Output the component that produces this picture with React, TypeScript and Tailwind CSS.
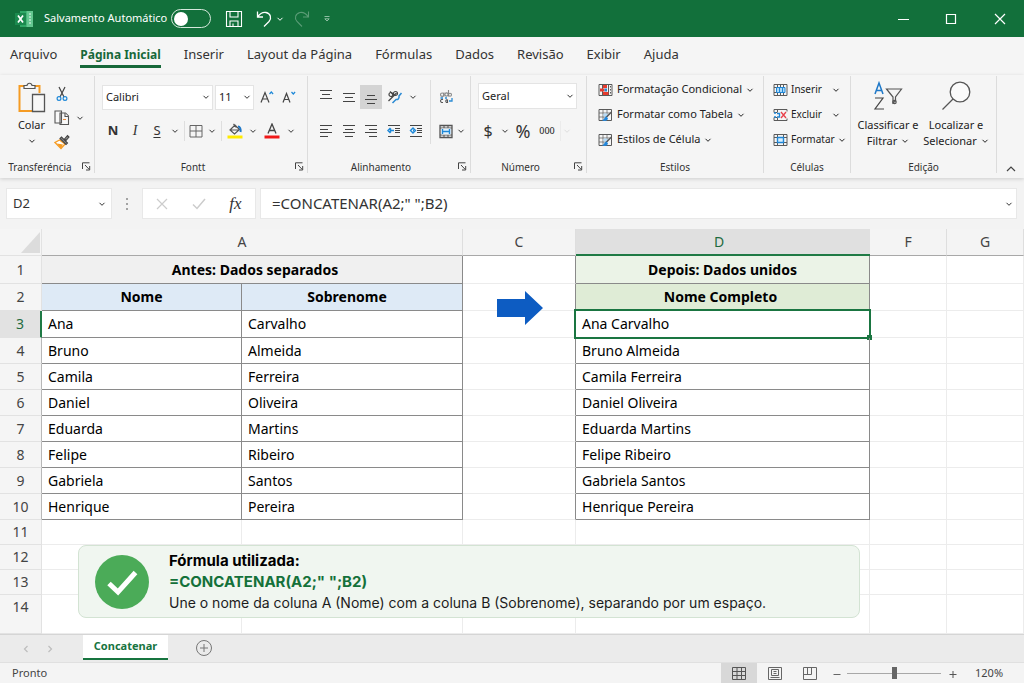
import type { ReactNode } from "react";

const people = [
  ["Ana", "Carvalho"],
  ["Bruno", "Almeida"],
  ["Camila", "Ferreira"],
  ["Daniel", "Oliveira"],
  ["Eduarda", "Martins"],
  ["Felipe", "Ribeiro"],
  ["Gabriela", "Santos"],
  ["Henrique", "Pereira"],
];

const tabs = ["Arquivo", "Página Inicial", "Inserir", "Layout da Página", "Fórmulas", "Dados", "Revisão", "Exibir", "Ajuda"];

function Chevron({ className = "" }: { className?: string }) {
  return (
    <svg viewBox="0 0 8 8" className={`h-2 w-2 shrink-0 ${className}`} fill="none" stroke="currentColor" strokeWidth="1" aria-hidden="true">
      <path d="M1.500 2.800 4 5.300l2.500-2.500" />
    </svg>
  );
}

function Launcher({ label }: { label: string }) {
  return (
    <button aria-label={label} className="flex w-4 items-center justify-center">
      <svg viewBox="0 0 9 9" className="h-[9px] w-[9px]" fill="none" stroke="#444" strokeWidth="1" aria-hidden="true">
        <path d="M.5 7V.8h7M3 3l4.2 4.4M7.7 4v4H4" />
      </svg>
    </button>
  );
}

function Group({ label, launcher, className, children }: { label: string; launcher?: boolean; className: string; children: ReactNode }) {
  return (
    <section aria-label={label} className={`flex h-[97px] shrink-0 flex-col border-r border-[#dcdcdc] ${className}`}>
      <div className="h-[84px]">{children}</div>
      <div className="flex h-[13px] items-center">
        <span className="flex-1 text-center text-[10px] leading-[14px] text-[#333]">{label}</span>
        {launcher && <Launcher label={`Opções de ${label}`} />}
      </div>
    </section>
  );
}

function Tool({ label, className = "w-[23px]", children }: { label: string; className?: string; children: ReactNode }) {
  return (
    <button aria-label={label} className={`flex h-6 shrink-0 items-center justify-center ${className}`}>
      {children}
    </button>
  );
}

function Drop({ label, className = "w-[14px]" }: { label: string; className?: string }) {
  return (
    <Tool label={label} className={className}>
      <Chevron />
    </Tool>
  );
}

function Picker({ label, value, className }: { label: string; value: string; className: string }) {
  return (
    <div className={`relative flex items-center border border-[#e4e4e4] bg-white ${className}`}>
      <select aria-label={label} className="h-full w-full appearance-none bg-transparent pl-[3px] text-[11px] text-[#222] outline-none" defaultValue={value}>
        <option>{value}</option>
      </select>
      <Chevron className="pointer-events-none absolute right-[2px]" />
    </div>
  );
}

function Lines({ rows }: { rows: [number, number, number][] }) {
  return (
    <svg viewBox="0 0 14 14" className="h-[14px] w-[14px]" stroke="#444" strokeWidth="1" aria-hidden="true">
      {rows.map(([x1, x2, y]) => (
        <path key={y} d={`M${x1} ${y}H${x2}`} />
      ))}
    </svg>
  );
}

function Indent({ right }: { right?: boolean }) {
  return (
    <svg viewBox="0 0 14 14" className="h-[14px] w-[14px]" fill="none" stroke="#444" aria-hidden="true">
      <path d="M1 1.500h12M8 4.500h5M8 8.500h5M1 12.500h12M8 6.500h5" />
      {right ? (
        <path d="M4 4 6.500 6.500 4 9 1.500 6.500zM4 6.500h1" stroke="#1e88d8" strokeWidth="1.400" />
      ) : (
        <path d="M3.500 4 1 6.500 3.500 9M3.500 4.500v4M3.500 6.500H7" stroke="#1e88d8" strokeWidth="1.500" />
      )}
    </svg>
  );
}

function Sep({ className = "bg-[#dedede]" }: { className?: string }) {
  return <span className={`h-5 w-px shrink-0 ${className}`} />;
}

type IconKind = "conditional" | "brush" | "insert" | "delete" | "format";

function GridIcon({ kind }: { kind: IconKind }) {
  return (
    <svg viewBox="0 0 15 14" className="h-[14px] w-[15px] shrink-0" fill="none" stroke="#5a5a5a" aria-hidden="true">
      {kind === "conditional" && (
        <>
          <path d="M1 1.500h13v11H1zM4.500 1.500v11M10.500 1.500v11" />
          <path d="M12.500 3v1.500M12.500 6v1.500M12.500 9v1.500" />
          <path d="M5 2h4v3H5zM5 9h5.500v3H5zM2 5.500h4.500v3H2z" fill="#e63b2e" stroke="none" />
          <path d="M6.500 5.500h2.500v3H6.500z" fill="#2a8ad4" stroke="none" />
        </>
      )}
      {kind === "brush" && (
        <>
          <path d="M1 1.500h12.500v11H1z" />
          <path d="M5 1.500v11M9 1.500V9M1 5h11M1 9h8" strokeWidth=".7" />
          <path d="M5.500 5.500h4v3h-4z" fill="#b9dcf6" stroke="none" />
          <path d="M13.500 4 8 9.500" stroke="#555" strokeWidth="1.500" />
          <path d="M8.500 8.500c-2 0-2 3-4.500 4 2.500 1 5.500.5 6-2z" fill="#2488dc" stroke="none" />
        </>
      )}
      {kind === "insert" && (
        <>
          <path d="M1 1.500h13v11H1zM4.500 1.500v3M10.500 1.500v3M7.500 1.500v3M4.500 9.500v3M10.500 9.500v3M7.500 9.500v3M1 4.500h3M1 9.500h3" />
          <path d="M3.500 4.500h8.500v5H3.500z" fill="#a9d8f7" stroke="#1f86d6" />
          <path d="M6.500 4.500v5M9.500 4.500v5" stroke="#1f86d6" />
        </>
      )}
      {kind === "delete" && (
        <>
          <path d="M8 1.500H1v3h3M8 12.500H1v-3h3M4.500 1.500v3M4.500 9.500v3M8 1.500h6v2M8 12.500h6v-2" />
          <path d="M1 5h2M1 9h2M4 5.500h2.500v3.500H4" stroke="#1f86d6" strokeWidth="1.300" />
          <path d="m8 4 5 6M13 4l-5 6" stroke="#e8414b" strokeWidth="1.300" />
        </>
      )}
      {kind === "format" && (
        <>
          <path d="M1 1.500h13v11H1zM1 4.500h13M1 9.500h13M4.500 1.500v11M10.500 1.500v11" />
          <path d="M4.500 4.500h6v5h-6z" fill="#d8eefc" stroke="#1f86d6" strokeWidth="1.400" />
        </>
      )}
    </svg>
  );
}

function MenuRow({ kind, label, className = "gap-1 text-[11px]" }: { kind: IconKind; label: string; className?: string }) {
  return (
    <button className={`flex h-[25px] items-center whitespace-nowrap text-[#222] ${className}`}>
      <GridIcon kind={kind} />
      <span>{label}</span>
      <Chevron className="ml-auto" />
    </button>
  );
}

function TitleBar() {
  return (
    <header className="flex h-[37px] items-center bg-[#12703b] pl-[15px] text-white">
      <svg viewBox="0 0 18 16" className="h-4 w-[18px]" aria-hidden="true">
        <path d="M5 0h13v16H5z" fill="#2fa866" />
        <path d="M11.500 0H18v16h-6.500z" fill="#63c78f" />
        <path d="M14 3h2M14 6h2M14 9h2M14 12h2" stroke="#e7f7ee" />
        <path d="M0 2h11v12H0z" fill="#1b8a4e" />
        <path d="m3 4.500 5 7M8 4.500l-5 7" stroke="#fff" strokeWidth="1.700" />
      </svg>
      <label className="ml-[11px] flex items-center gap-1 text-[11px]">
        Salvamento Automático
        <input type="checkbox" className="peer sr-only" />
        <span className="flex h-[19px] w-10 items-center rounded-full border border-[#d5e8dc] px-[2px]">
          <span className="h-[14px] w-[14px] rounded-full bg-white" />
        </span>
      </label>
      <button aria-label="Salvar" className="ml-[14px]">
        <svg viewBox="0 0 18 18" className="h-[18px] w-[18px]" fill="none" stroke="#fff" strokeWidth="1.100" aria-hidden="true">
          <path d="M1.500 1.500h15v15h-15zM5 1.500V7h8V1.500M5 16.500V11h8v5.500M8 16.500v-3" />
        </svg>
      </button>
      <button aria-label="Desfazer" className="ml-[13px]">
        <svg viewBox="0 0 16 18" className="h-[18px] w-4" fill="none" stroke="#fff" strokeWidth="1.300" aria-hidden="true">
          <path d="M1.500 1.500v5.500H7M1.500 7C4 3.500 7 2 10 2.500c4.500 1 6 5.500 3 9L8 16.500" />
        </svg>
      </button>
      <button aria-label="Opções de desfazer" className="ml-1">
        <Chevron />
      </button>
      <button aria-label="Refazer" className="ml-[10px] text-[#5a9c76]">
        <svg viewBox="0 0 16 18" className="h-[18px] w-4" fill="none" stroke="currentColor" strokeWidth="1.100" aria-hidden="true">
          <path d="M14.500 1.500v5.500H9M14.500 7C12 3.500 9 2 6 2.500c-4.500 1-6 5.500-3 9L8 16.500" />
        </svg>
      </button>
      <button aria-label="Personalizar acesso rápido" className="ml-[13px] text-[#9cc7ae]">
        <svg viewBox="0 0 8 8" className="h-2 w-2" fill="none" stroke="currentColor" strokeWidth=".9" aria-hidden="true">
          <path d="M1.500 1.500h5M1.800 3.800h4.400L4 6z" />
        </svg>
      </button>
      <div className="ml-auto flex">
        <button aria-label="Minimizar" className="flex w-12 justify-center">
          <svg viewBox="0 0 12 12" className="h-3 w-3" stroke="#fff" aria-hidden="true"><path d="M1 6.500h11" /></svg>
        </button>
        <button aria-label="Maximizar" className="flex w-12 justify-center">
          <svg viewBox="0 0 12 12" className="h-3 w-3" fill="none" stroke="#fff" strokeWidth="1.200" aria-hidden="true"><path d="M1.500 1.500h9v9h-9z" /></svg>
        </button>
        <button aria-label="Fechar" className="flex w-[49px] justify-center">
          <svg viewBox="0 0 12 12" className="h-3 w-3" stroke="#fff" strokeWidth="1.200" aria-hidden="true"><path d="m1 1 10 10M11 1 1 11" /></svg>
        </button>
      </div>
    </header>
  );
}

function Ribbon() {
  return (
    <div className="relative z-10 flex h-[103px] bg-[#f5f5f5] pt-px text-[#333] shadow-[0_1px_4px_rgba(0,0,0,0.16)]">
      <Group label="Transferéncia" launcher className="w-[95px] pl-[2px]">
        <div className="flex h-full pt-[6px]">
          <button className="flex w-[48px] flex-col items-center pl-[11px] text-[11px] text-[#222]">
            <svg viewBox="0 0 30 32" className="h-8 w-[30px]" fill="none" aria-hidden="true">
              <path d="M8 4H2.500v25H15M17 4h5.500v7" stroke="#f59b23" strokeWidth="2" />
              <path d="M7 6.500V3.500h3C10.500.5 14.500.5 15 3.500h3v3z" fill="#f5f5f5" stroke="#555" strokeWidth="1.200" />
              <path d="M15.500 12.500h12v17h-12z" fill="#f8f8f8" stroke="#555" strokeWidth="1.300" />
            </svg>
            <span className="mt-[3px] leading-4">Colar</span>
            <Chevron className="mt-1" />
          </button>
          <div className="flex flex-col pl-[4px]">
            <Tool label="Recortar" className="w-[16px]">
              <svg viewBox="0 0 12 16" className="h-4 w-3" fill="none" aria-hidden="true">
                <path d="m3 1 5 10M9 1 4 11" stroke="#444" strokeWidth="1.200" />
                <circle cx="3" cy="12.500" r="1.900" stroke="#1e88d8" strokeWidth="1.200" />
                <circle cx="9" cy="12.500" r="1.900" stroke="#1e88d8" strokeWidth="1.200" />
              </svg>
            </Tool>
            <div className="flex">
              <Tool label="Copiar" className="w-[16px]">
                <svg viewBox="0 0 16 16" className="h-4 w-4" fill="#f8f8f8" stroke="#555" strokeWidth="1.100" aria-hidden="true">
                  <path d="M1 1h6.500v12H1zM6 3h5.500l3 3v8.500H6z" />
                  <path d="M11 3v3.500h3.500" />
                  <path d="M9 9.500h3" stroke="#e88a3c" />
                </svg>
              </Tool>
              <Drop label="Opções de copiar" className="ml-[3px] w-[14px]" />
            </div>
            <Tool label="Pincel de Formatação" className="w-[16px]">
              <svg viewBox="0 0 16 16" className="h-4 w-4" fill="none" aria-hidden="true">
                <path d="M5.500 6 1 8.500l6 6 4-4.500z" fill="#fff" stroke="#f59b23" strokeWidth="1.300" />
                <path d="m3 9.500 6 1-2 4z" fill="#f59b23" />
                <path d="m6 4.500 6 6 1.500-1.500-6-6zM10.500 5l3-3.500 1.500 1.500-3 3.500z" fill="#8a8a8a" stroke="#444" strokeWidth="1.100" />
              </svg>
            </Tool>
          </div>
        </div>
      </Group>

      <Group label="Fontt" launcher className="w-[213px]">
        <div className="pt-1 pl-[7px]">
          <div className="flex h-[34px] items-center">
            <Picker label="Fonte" value="Calibri" className="h-[25px] w-[111px]" />
            <Picker label="Tamanho da fonte" value="11" className="ml-[2px] h-[25px] w-[39px]" />
            <Tool label="Aumentar fonte" className="ml-[2px] w-[22px]">
              <svg viewBox="0 0 14 14" className="h-[14px] w-[14px]" fill="none" stroke="#444" strokeWidth="1.200" aria-hidden="true">
                <path d="m1 12.500 4-10 4 10M2.500 9h5" /><path d="m9.500 4 1.800-2 1.800 2" stroke="#1e88d8" />
              </svg>
            </Tool>
            <Tool label="Diminuir fonte" className="w-[22px]">
              <svg viewBox="0 0 14 14" className="h-[14px] w-[14px]" fill="none" stroke="#444" strokeWidth="1.200" aria-hidden="true">
                <path d="m1 12.500 3.500-9 3.500 9M2.500 9.500h4" /><path d="m9.500 2 1.800 2 1.800-2" stroke="#1e88d8" />
              </svg>
            </Tool>
          </div>
          <div className="flex h-[34px] items-center">
            <Tool label="Negrito" className="w-[22px]"><span className="text-[13px] font-bold">N</span></Tool>
            <Tool label="Itálico" className="w-[22px]"><span className="font-['Liberation_Serif',serif] text-sm italic">I</span></Tool>
            <Tool label="Sublinhado" className="w-[22px]"><span className="text-[13px] underline underline-offset-2">S</span></Tool>
            <Drop label="Opções de sublinhado" />
            <Sep className="mx-[2px] bg-[#dedede]" />
            <Tool label="Bordas" className="w-[18px]">
              <svg viewBox="0 0 14 14" className="h-[14px] w-[14px]" fill="none" stroke="#666" aria-hidden="true">
                <path d="M1 1.500h12v11.500H1zM7 1.500V13M1 7h12" />
              </svg>
            </Tool>
            <Drop label="Opções de bordas" />
            <Sep className="mx-[2px] bg-[#dedede]" />
            <Tool label="Cor de preenchimento" className="w-[22px]">
              <svg viewBox="0 0 16 16" className="h-4 w-4" fill="none" aria-hidden="true">
                <path d="m3 7 5-5 4.500 4.500-5 4.500zM6.500 1l3 3.500M3 7h9" stroke="#555" strokeWidth="1.200" />
                <path d="M11 3.500c2 0 3 2.500 2.500 5.500" stroke="#1e78c8" strokeWidth="2" />
                <path d="M.5 12.500h15v3H.5z" fill="#ffeb00" />
              </svg>
            </Tool>
            <Drop label="Opções de preenchimento" />
            <Tool label="Cor da fonte" className="w-[24px]">
              <svg viewBox="0 0 16 16" className="h-4 w-4" fill="none" aria-hidden="true">
                <path d="m4 10.500 4-9.500 4 9.500M5.300 7.500h5.400" stroke="#444" strokeWidth="1.300" />
                <path d="M.5 12.500h15v3H.5z" fill="#f01818" />
              </svg>
            </Tool>
            <Drop label="Opções de cor da fonte" />
          </div>
        </div>
      </Group>

      <Group label="Alinhamento" launcher className="w-[163px]">
        <div className="flex pt-1 pl-[6px]">
          <div className="w-[116px]">
            <div className="flex h-[34px] items-center">
              <Tool label="Alinhar acima"><Lines rows={[[1, 13, 0.5], [3, 11, 4.5], [1, 13, 8.5]]} /></Tool>
              <Tool label="Alinhar no meio"><Lines rows={[[1, 13, 3.5], [3, 11, 7.5], [1, 13, 11.5]]} /></Tool>
              <Tool label="Alinhar abaixo" className="w-[22px] bg-[#d4d4d4]"><Lines rows={[[3, 11, 5.5], [1, 13, 9.5], [3, 11, 13.5]]} /></Tool>
              <Tool label="Orientação" className="w-[26px]">
                <svg viewBox="0 0 16 16" className="h-4 w-4" fill="none" strokeWidth="1.200" aria-hidden="true">
                  <circle cx="4" cy="5.500" r="2" stroke="#444" /><path d="M3 2.500 7.500 7M1.500 12 9.500 4" stroke="#444" />
                  <circle cx="8.500" cy="4.500" r="2" stroke="#444" />
                  <path d="M5.500 14 9 10.500c2 .5 3.500-1.500 3-3.500l2.500-3" stroke="#2a8ad4" strokeWidth="1.500" />
                </svg>
              </Tool>
              <Drop label="Opções de orientação" className="w-[10px]" />
            </div>
            <div className="flex h-[34px] items-center">
              <Tool label="Alinhar à esquerda"><Lines rows={[[1, 13, 1.5], [1, 9, 5.5], [1, 13, 8.5], [1, 9, 12.5]]} /></Tool>
              <Tool label="Centralizar"><Lines rows={[[1, 13, 1.5], [3, 11, 5.5], [1, 13, 8.5], [3, 11, 12.5]]} /></Tool>
              <Tool label="Alinhar à direita" className="w-[22px]"><Lines rows={[[1, 13, 1.5], [5, 13, 5.5], [1, 13, 8.5], [5, 13, 12.5]]} /></Tool>
              <Tool label="Diminuir recuo"><Indent /></Tool>
              <Tool label="Aumentar recuo" className="w-[22px]"><Indent right /></Tool>
            </div>
          </div>
          <span className="h-16 w-px bg-[#dedede]" />
          <div className="pl-[5px]">
            <div className="flex h-[34px] items-center">
              <Tool label="Quebrar texto" className="w-5">
                <svg viewBox="0 0 14 14" className="h-[14px] w-[14px]" fill="none" strokeWidth="1.100" aria-hidden="true">
                  <path d="M5 2.500v4M9.500 0v6.500" stroke="#888" />
                  <circle cx="3.200" cy="4.700" r="1.700" stroke="#888" /><circle cx="7.500" cy="4.500" r="1.600" stroke="#888" /><circle cx="11" cy="4.700" r="1.500" stroke="#888" />
                  <path d="M4 9.500c-3-1-3.500 3.500 0 3M8.500 10c-2-1-2.500 3 0 2.500V9.500" stroke="#555" />
                  <path d="M13 8v3h-3M1.500 8H4M6 8h2" stroke="#2a8ad4" strokeWidth="1.300" />
                </svg>
              </Tool>
            </div>
            <div className="flex h-[34px] items-center">
              <Tool label="Mesclar e Centralizar" className="w-5">
                <svg viewBox="0 0 14 15" className="h-[15px] w-[14px]" fill="none" stroke="#555" aria-hidden="true">
                  <path d="M1 1.500h12v12H1z" strokeWidth="1.300" /><path d="M1 4h12M1 11h12M5 1v3M9 1v3M5 11v3M9 11v3" />
                  <path d="M2.500 4.500h9v6h-9z" fill="#e4f3fd" stroke="none" />
                  <path d="M3.500 5v5M10.500 5v5M4 7.500h6" stroke="#1e88d8" strokeWidth="1.400" />
                </svg>
              </Tool>
              <Drop label="Opções de mesclar" className="w-[10px]" />
            </div>
          </div>
        </div>
      </Group>

      <Group label="Número" launcher className="w-[116px]">
        <div className="pt-[3px] pl-[7px]">
          <div className="flex h-[34px] items-center">
            <Picker label="Formato de número" value="Geral" className="h-[26px] w-[99px]" />
          </div>
          <div className="flex h-[36px] items-center">
            <Tool label="Moeda" className="w-5"><span className="text-base">$</span></Tool>
            <Drop label="Opções de moeda" />
            <Tool label="Porcentagem" className="w-[22px]"><span className="text-[18px]">%</span></Tool>
            <Tool label="Milhares" className="w-[26px]"><span className="text-[9px] font-medium">000</span></Tool>
            <Sep className="bg-[#ebebeb]" />
            <Drop label="Mais formatos" className="w-[12px] text-[#dedede]" />
          </div>
        </div>
      </Group>

      <Group label="Estilos" className="w-[177px]">
        <div className="flex flex-col items-start pt-px pl-[11px]">
          <MenuRow kind="conditional" label="Formatação Condicional" />
          <MenuRow kind="brush" label="Formatar como Tabela" />
          <MenuRow kind="brush" label="Estilos de Célula" />
        </div>
      </Group>

      <Group label="Células" className="w-[87px]">
        <div className="flex flex-col pt-px pr-[10px] pl-[9px]">
          <MenuRow kind="insert" label="Inserir" className="gap-[3px] text-[10px]" />
          <MenuRow kind="delete" label="Excluir" className="gap-[3px] text-[10px]" />
          <MenuRow kind="format" label="Formatar" className="gap-[3px] text-[10px]" />
        </div>
      </Group>

      <Group label="Edição" className="w-[146px]">
        <div className="flex pt-[5px] pl-[3px] text-center text-[11px] leading-4 whitespace-nowrap text-[#222]">
          <button className="flex w-[68px] flex-col items-center">
            <svg viewBox="0 0 30 32" className="h-8 w-[30px]" fill="none" strokeWidth="1.200" aria-hidden="true">
              <path d="m2 13 4-11 4 11M3.500 9.500h5" stroke="#1e78c8" strokeWidth="1.500" />
              <path d="M2 17h8L2 28h9" stroke="#444" />
              <path d="M13.500 8h15L22.500 16v4l-2.500 2v-6z" stroke="#555" /><circle cx="21.500" cy="21" r="1.700" stroke="#555" />
            </svg>
            <span className="mt-1">Classificar e</span>
            <span className="flex items-center gap-1">Filtrar <Chevron /></span>
          </button>
          <button className="flex w-[68px] flex-col items-center">
            <svg viewBox="0 0 30 32" className="h-8 w-[30px]" fill="none" stroke="#555" strokeWidth="1.300" aria-hidden="true">
              <circle cx="19" cy="11" r="9.800" fill="#fafafa" /><path d="M12 18 1.500 28.500" />
            </svg>
            <span className="mt-1">Localizar e</span>
            <span className="flex items-center gap-1">Selecionar <Chevron /></span>
          </button>
        </div>
      </Group>
      <button aria-label="Recolher a faixa de opções" className="ml-auto flex w-7 items-end justify-center pb-[6px]">
        <svg viewBox="0 0 10 6" className="h-[6px] w-[10px]" fill="none" stroke="#444" strokeWidth="1.200" aria-hidden="true"><path d="m1 5 4-4 4 4" /></svg>
      </button>
    </div>
  );
}

function FormulaBar() {
  return (
    <div className="flex h-[51px] items-center bg-[#f3f3f3] pr-[7px] pl-[6px] text-[#333]">
      <div className="relative flex h-[31px] w-[106px] items-center border border-[#e8e8e8] bg-white">
        <input aria-label="Caixa de nome" className="w-full bg-transparent pl-[6px] text-[13px] outline-none" defaultValue="D2" />
        <Chevron className="pointer-events-none absolute right-[5px]" />
      </div>
      <svg viewBox="0 0 4 14" className="mx-[13px] h-[14px] w-1" fill="#888" aria-hidden="true">
        <circle cx="2" cy="2" r="1" /><circle cx="2" cy="7" r="1" /><circle cx="2" cy="12" r="1" />
      </svg>
      <div className="flex h-[31px] w-[114px] items-center border border-[#e8e8e8] bg-white">
        <Tool label="Cancelar" className="w-[37px]">
          <svg viewBox="0 0 12 12" className="h-3 w-3" stroke="#ccc" strokeWidth="1.200" aria-hidden="true"><path d="m1 1 10 10M11 1 1 11" /></svg>
        </Tool>
        <Tool label="Inserir" className="w-[37px]">
          <svg viewBox="0 0 14 12" className="h-3 w-[14px]" fill="none" stroke="#ccc" strokeWidth="1.500" aria-hidden="true"><path d="m1 6.500 4 4L13 1" /></svg>
        </Tool>
        <Tool label="Inserir função" className="w-[37px]">
          <span className="font-['Liberation_Serif',serif] text-[17px] italic">fx</span>
        </Tool>
      </div>
      <div className="relative ml-1 flex h-[31px] flex-1 items-center border border-[#e8e8e8] bg-white">
        <input aria-label="Barra de fórmulas" className="w-full bg-transparent pl-[11px] text-[15px] text-[#333] outline-none" defaultValue={'=CONCATENAR(A2;" ";B2)'} />
        <Chevron className="pointer-events-none absolute right-[3px]" />
      </div>
    </div>
  );
}

const light = "border-r border-b border-[#ececec]";
const dark = "border-r border-b border-[#8a8a8a]";
const gap = "border-r border-b border-r-[#8a8a8a] border-b-[#ececec]";
const rowHead = "border-r border-b border-[#e2e2e2] bg-[#f5f5f5] text-[14px] font-normal text-[#444]";
const colHead = "border-r border-r-[#dedede] border-b border-b-[#a8a8a8] bg-[#f4f4f4] text-[14px] font-normal text-[#444]";

function Blank() {
  return (
    <>
      <td className={light} />
      <td className={light} />
    </>
  );
}

function Sheet() {
  return (
    <div className="relative flex-1 overflow-hidden bg-white">
      <table className="w-full table-fixed border-separate border-spacing-0 text-[14px] leading-[20px] text-black">
        <colgroup>
          <col className="w-[42px]" />
          <col className="w-[200px]" />
          <col className="w-[221px]" />
          <col className="w-[113px]" />
          <col className="w-[294px]" />
          <col className="w-[77px]" />
          <col />
        </colgroup>
        <thead>
          <tr className="h-[27px]">
            <th className="border-r border-b border-[#e2e2e2] bg-[#f5f5f5]">
              <svg viewBox="0 0 20 21" className="ml-auto h-[21px] w-5" aria-hidden="true"><path d="M19 0v21H0z" fill="#dcdcdc" /></svg>
            </th>
            <th colSpan={2} className={`pr-5 ${colHead}`}>A</th>
            <th className={colHead}>C</th>
            <th className="border-b-2 border-b-[#1f7a45] bg-[#e0e0e0] pr-2 text-[14px] font-normal text-[#1f6b3f]">D</th>
            <th className={colHead}>F</th>
            <th className={colHead}>G</th>
          </tr>
        </thead>
        <tbody>
          <tr className="h-[28px]">
            <th className={rowHead}>1</th>
            <td colSpan={2} className={`bg-[#f0f0f0] pl-[6px] text-center font-bold ${dark}`}>Antes: Dados separados</td>
            <td className={gap} />
            <td className={`bg-[#ebf3e7] text-center font-bold ${dark}`}>Depois: Dados unidos</td>
            <Blank />
          </tr>
          <tr className="h-[27px]">
            <th className={rowHead}>2</th>
            <td className={`bg-[#deeaf6] text-center font-bold ${dark}`}>Nome</td>
            <td className={`bg-[#deeaf6] pr-[10px] text-center font-bold ${dark}`}>Sobrenome</td>
            <td className={gap} />
            <td className={`bg-[#dfecd6] pr-1 text-center font-bold ${dark}`}>Nome Completo</td>
            <Blank />
          </tr>
          {people.map(([first, last], i) => (
            <tr key={first} className={i < 1 ? "h-[27px]" : "h-[26px]"}>
              {i === 0 ? (
                <th className="border-r-2 border-b border-r-[#1f7a45] border-b-[#e2e2e2] bg-[#e2e2e2] text-[14px] font-normal text-[#1f6b3f]">3</th>
              ) : (
                <th className="border-r border-b border-r-[#b8b8b8] border-b-[#e2e2e2] bg-[#f5f5f5] text-[14px] font-normal text-[#444]">{i + 3}</th>
              )}
              <td className={`pl-[6px] ${dark}`}>{first}</td>
              <td className={`pl-[6px] ${dark}`}>{last}</td>
              <td className={gap} />
              <td className={`relative pl-[6px] ${dark}`}>
                {first} {last}
                {i === 0 && (
                  <span className="pointer-events-none absolute -inset-[2px] border-2 border-[#1a7541]">
                    <span className="absolute -right-[3px] -bottom-[3px] h-[5px] w-[5px] bg-[#1a7541]" />
                  </span>
                )}
              </td>
              <Blank />
            </tr>
          ))}
          {[11, 12, 13].map((n) => (
            <tr key={n} className="h-[25px]">
              <th className={rowHead}>{n}</th>
              <td className={light} />
              <td className={light} />
              <td className={light} />
              <td className={light} />
              <Blank />
            </tr>
          ))}
          <tr className="h-[39px] align-top">
            <th className={`pt-[2px] ${rowHead}`}>14</th>
            <td className={light} />
            <td className={light} />
            <td className={light} />
            <td className={light} />
            <Blank />
          </tr>
        </tbody>
      </table>

      <svg viewBox="0 0 48 36" className="absolute top-[61px] left-[496px] h-9 w-12" aria-label="Resultado" role="img">
        <path d="M1 9h28V1l18 17-18 17v-8H1z" fill="#0d5cc2" />
      </svg>

      <aside className="absolute top-[316px] right-[164px] left-[78px] flex items-center rounded-lg border border-[#d3e3d3] bg-[#f0f6f0] py-1 pl-4">
        <svg viewBox="0 0 54 54" className="h-[54px] w-[54px] shrink-0" aria-hidden="true">
          <circle cx="27" cy="27" r="27" fill="#4bab58" />
          <path d="m14 28.500 9 8.500L40.500 17.500" fill="none" stroke="#fff" strokeWidth="5" />
        </svg>
        <div className="pl-[20px] font-['Inter','Noto_Sans',sans-serif] text-[14px] leading-[21px] whitespace-nowrap text-[#1c1c1c]">
          <p className="text-[15px] font-bold text-black">Fórmula utilizada:</p>
          <p className="text-[15px] font-bold text-[#14713a]">{'=CONCATENAR(A2;" ";B2)'}</p>
          <p>Une o nome da coluna A (Nome) com a coluna B (Sobrenome), separando por um espaço.</p>
        </div>
      </aside>
    </div>
  );
}

function Footer() {
  return (
    <footer>
      <div className="flex h-[28px] border-t border-[#d5d5d5] bg-[#ebebeb] text-[#bdbdbd]">
        <div className="flex w-[83px] items-center pl-[22px]">
          <button aria-label="Planilha anterior">
            <svg viewBox="0 0 8 8" className="h-2 w-2" fill="none" stroke="currentColor" strokeWidth="1.200" aria-hidden="true"><path d="M5.500 1 2.500 4l3 3" /></svg>
          </button>
          <button aria-label="Próxima planilha" className="ml-4">
            <svg viewBox="0 0 8 8" className="h-2 w-2" fill="none" stroke="currentColor" strokeWidth="1.200" aria-hidden="true"><path d="m2.500 1 3 3-3 3" /></svg>
          </button>
        </div>
        <button className="h-[25px] w-[85px] border-b-2 border-[#17743f] bg-white text-[11px] font-bold text-[#17743f]">Concatenar</button>
        <button aria-label="Nova planilha" className="ml-[27px] h-[25px] text-[#777]">
          <svg viewBox="0 0 18 18" className="h-[18px] w-[18px]" fill="none" stroke="currentColor" aria-hidden="true"><circle cx="9" cy="9" r="7.500" /><path d="M9 5v8M5 9h8" /></svg>
        </button>
      </div>
      <div className="flex h-[22px] items-center border-t border-[#e0e0e0] bg-[#f4f4f4] text-[11px] text-[#444]">
        <span className="pl-3">Pronto</span>
        <div className="ml-auto flex h-full items-center">
          <button aria-label="Normal" className="flex h-full w-9 items-center justify-center bg-[#d8d8d8]">
            <svg viewBox="0 0 14 13" className="h-[13px] w-[14px]" fill="none" stroke="#555" aria-hidden="true"><path d="M.5.5h13v12H.5zM.5 4.500h13M.5 8.500h13M5 .5v12M9.500.5v12" /></svg>
          </button>
          <button aria-label="Layout da Página" className="flex w-9 justify-center">
            <svg viewBox="0 0 14 13" className="h-[13px] w-[14px]" fill="none" stroke="#666" aria-hidden="true"><path d="M.5.5h13v12H.5zM3.500 2.500h7v6h-7zM5.500 4.500h3M5.500 6.500h3M2.500 10.500h9" /></svg>
          </button>
          <button aria-label="Quebra de Página" className="flex w-[34px] justify-center">
            <svg viewBox="0 0 14 13" className="h-[13px] w-[14px]" fill="none" stroke="#666" aria-hidden="true"><path d="M.5.5h13v12H.5zM4.500.5v7M8.500.5v7M.5 7.500h8" /></svg>
          </button>
          <button aria-label="Reduzir" className="ml-[5px] flex w-[10px] justify-center">
            <svg viewBox="0 0 8 8" className="h-2 w-2" stroke="#666" aria-hidden="true"><path d="M.5 4.500h7" /></svg>
          </button>
          <input
            type="range"
            aria-label="Zoom"
            min={0}
            max={100}
            defaultValue={50}
            className="mx-[5px] h-3 w-[94px] appearance-none bg-transparent [&::-webkit-slider-runnable-track]:h-px [&::-webkit-slider-runnable-track]:bg-[#a8a8a8] [&::-webkit-slider-thumb]:-mt-[6px] [&::-webkit-slider-thumb]:h-3 [&::-webkit-slider-thumb]:w-[5px] [&::-webkit-slider-thumb]:appearance-none [&::-webkit-slider-thumb]:bg-[#666]"
          />
          <button aria-label="Ampliar" className="flex w-[14px] justify-center">
            <svg viewBox="0 0 8 8" className="h-2 w-2" stroke="#555" aria-hidden="true"><path d="M.5 4.500h7M4 1v7" /></svg>
          </button>
          <span className="w-[64px] pl-[15px]">120%</span>
        </div>
      </div>
    </footer>
  );
}

export default function App() {
  return (
    <div className="flex min-h-screen flex-col bg-[#f5f5f5] font-['Noto_Sans','Open_Sans',sans-serif]">
      <TitleBar />
      <nav aria-label="Guias" className="flex h-[38px] gap-[23px] bg-[#f5f5f5] pt-[7px] pl-[10px] text-[13px] text-[#333]">
        {tabs.map((tab) =>
          tab === "Página Inicial" ? (
            <button key={tab} aria-current="page" className="h-6 border-b-[3px] border-[#17683a] text-[12px] font-bold text-[#17683a]">
              {tab}
            </button>
          ) : (
            <button key={tab} className="h-[22px]">
              {tab}
            </button>
          ),
        )}
      </nav>
      <Ribbon />
      <FormulaBar />
      <main className="flex flex-1 flex-col">
        <Sheet />
      </main>
      <Footer />
    </div>
  );
}
